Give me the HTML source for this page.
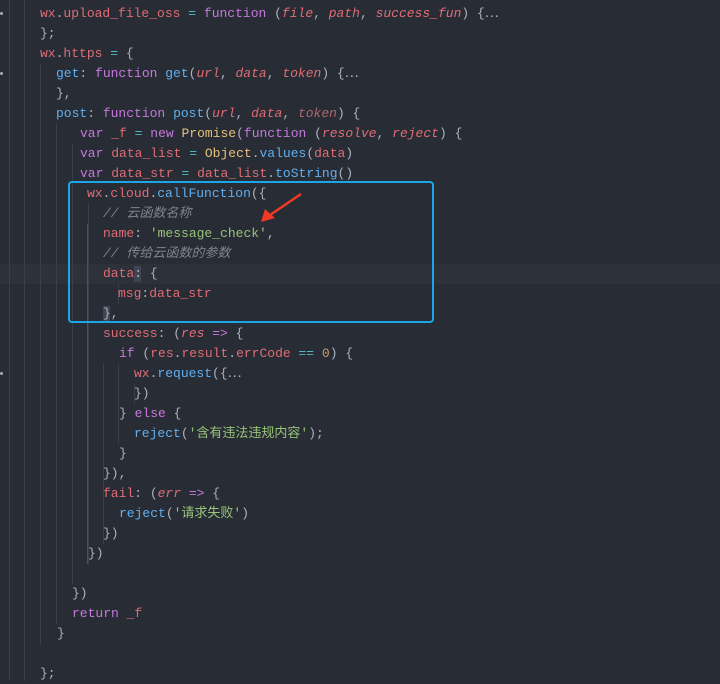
<!DOCTYPE html>
<html><head><meta charset="utf-8"><style>
body{margin:0;width:720px;height:681px;background:#282c34;overflow:hidden;position:relative;font-family:"Liberation Mono","Noto Sans CJK SC",monospace;font-size:13px;color:#abb2bf}
.l{position:absolute;height:20px;line-height:20px;white-space:pre;left:0}
.r{color:#e06c75}.k{color:#c678dd}.f{color:#61afef}.y{color:#e5c07b}.s{color:#98c379}.c{color:#7f848e;font-style:italic}.p{color:#e06c75;font-style:italic}.d{color:#b0666d;font-style:italic}.o{color:#56b6c2}.n{color:#d19a66}
.g{position:absolute;width:1px;background:#3b4048}
</style></head><body>
<div style="position:absolute;left:0;top:264px;width:720px;height:20px;background:#2c313a"></div>
<div class="g" style="left:9px;top:0;height:681px"></div>
<div class="g" style="left:24px;top:0;height:681px"></div>
<div class="g" style="left:40px;top:64px;height:580px"></div>
<div class="g" style="left:56px;top:124px;height:500px"></div>
<div class="g" style="left:72px;top:144px;height:440px"></div>
<div class="g" style="left:88px;top:204px;height:360px"></div>
<div class="g" style="left:103px;top:364px;height:180px"></div>
<div class="g" style="left:118px;top:284px;height:20px"></div>
<div class="g" style="left:118px;top:364px;height:80px"></div>
<div class="g" style="left:134px;top:384px;height:20px"></div>
<div class="g" style="left:87px;top:224px;height:340px;background:#4b5160"></div>
<div style="position:absolute;left:0;top:12px;width:3px;height:3px;background:#aaa;border-radius:50%"></div>
<div style="position:absolute;left:0;top:72px;width:3px;height:3px;background:#aaa;border-radius:50%"></div>
<div style="position:absolute;left:0;top:372px;width:3px;height:3px;background:#aaa;border-radius:50%"></div>
<div style="position:absolute;left:134px;top:266px;width:7px;height:16px;background:#3e4452"></div>
<div style="position:absolute;left:103px;top:306px;width:7px;height:16px;background:#3e4452"></div>

<div class="l" style="top:4px;left:40px"><span class="r">wx</span>.<span class="r">upload_file_oss</span> <span class="o">=</span> <span class="k">function</span> (<span class="p">file</span>, <span class="p">path</span>, <span class="p">success_fun</span>) {⋯</div>
<div class="l" style="top:24px;left:40px">};</div>
<div class="l" style="top:44px;left:40px"><span class="r">wx</span>.<span class="r">https</span> <span class="o">=</span> {</div>
<div class="l" style="top:64px;left:56px"><span class="f">get</span>: <span class="k">function</span> <span class="f">get</span>(<span class="p">url</span>, <span class="p">data</span>, <span class="p">token</span>) {⋯</div>
<div class="l" style="top:84px;left:56px">},</div>
<div class="l" style="top:104px;left:56px"><span class="f">post</span>: <span class="k">function</span> <span class="f">post</span>(<span class="p">url</span>, <span class="p">data</span>, <span class="d">token</span>) {</div>
<div class="l" style="top:124px;left:80px"><span class="k">var</span> <span class="r">_f</span> <span class="o">=</span> <span class="k">new</span> <span class="y">Promise</span>(<span class="k">function</span> (<span class="p">resolve</span>, <span class="p">reject</span>) {</div>
<div class="l" style="top:144px;left:80px"><span class="k">var</span> <span class="r">data_list</span> <span class="o">=</span> <span class="y">Object</span>.<span class="f">values</span>(<span class="r">data</span>)</div>
<div class="l" style="top:164px;left:80px"><span class="k">var</span> <span class="r">data_str</span> <span class="o">=</span> <span class="r">data_list</span>.<span class="f">toString</span>()</div>
<div class="l" style="top:184px;left:87px"><span class="r">wx</span>.<span class="r">cloud</span>.<span class="f">callFunction</span>({</div>
<div class="l c" style="top:204px;left:103px">// 云函数名称</div>
<div class="l" style="top:224px;left:103px"><span class="r">name</span>: <span class="s">'message_check'</span>,</div>
<div class="l c" style="top:244px;left:103px">// 传给云函数的参数</div>
<div class="l" style="top:264px;left:103px"><span class="r">data</span>: {</div>
<div class="l" style="top:284px;left:118px"><span class="r">msg</span>:<span class="r">data_str</span></div>
<div class="l" style="top:304px;left:103px">},</div>
<div class="l" style="top:324px;left:103px"><span class="r">success</span>: (<span class="p">res</span> <span class="k">=&gt;</span> {</div>
<div class="l" style="top:344px;left:119px"><span class="k">if</span> (<span class="r">res</span>.<span class="r">result</span>.<span class="r">errCode</span> <span class="o">==</span> <span class="n">0</span>) {</div>
<div class="l" style="top:364px;left:134px"><span class="r">wx</span>.<span class="f">request</span>({⋯</div>
<div class="l" style="top:384px;left:134px">})</div>
<div class="l" style="top:404px;left:119px">} <span class="k">else</span> {</div>
<div class="l" style="top:424px;left:134px"><span class="f">reject</span>(<span class="s">'含有违法违规内容'</span>);</div>
<div class="l" style="top:444px;left:119px">}</div>
<div class="l" style="top:464px;left:103px">}),</div>
<div class="l" style="top:484px;left:103px"><span class="r">fail</span>: (<span class="p">err</span> <span class="k">=&gt;</span> {</div>
<div class="l" style="top:504px;left:119px"><span class="f">reject</span>(<span class="s">'请求失败'</span>)</div>
<div class="l" style="top:524px;left:103px">})</div>
<div class="l" style="top:544px;left:88px">})</div>
<div class="l" style="top:584px;left:72px">})</div>
<div class="l" style="top:604px;left:72px"><span class="k">return</span> <span class="r">_f</span></div>
<div class="l" style="top:624px;left:57px">}</div>
<div class="l" style="top:664px;left:40px">};</div>

<div style="position:absolute;left:68px;top:181px;width:362px;height:138px;border:2.5px solid #1ba6ea;border-radius:4px"></div>
<svg style="position:absolute;left:0;top:0" width="720" height="681"><line x1="301" y1="194" x2="270" y2="215" stroke="#f03a23" stroke-width="2.5"/><polygon points="261,222 265,209 275,218" fill="#f03a23"/></svg>
</body></html>
